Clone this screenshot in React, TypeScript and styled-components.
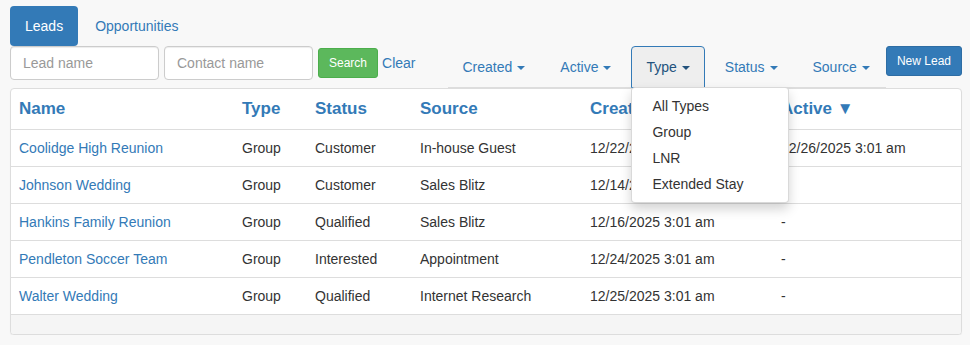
import styled, { createGlobalStyle, css } from "styled-components";

const GlobalStyle = createGlobalStyle`
  body {
    margin: 0;
    background-color: #f8f8f8;
    font-family: "Liberation Sans", Arial, Helvetica, sans-serif;
    font-size: 14px;
    color: #333;
  }
  * {
    box-sizing: border-box;
  }
`;

const blue = "#337ab7";

const Page = styled.div`
  padding: 6px 8px 0 10px;
`;

const Pills = styled.ul`
  display: flex;
  gap: 2px;
  margin: 0;
  padding: 0;
  list-style: none;
`;

const Pill = styled.li<{ $active?: boolean }>`
  padding: 10px 15px;
  line-height: 20px;
  border-radius: 4px;
  color: ${blue};
  cursor: pointer;
  ${(p) =>
    p.$active &&
    css`
      background-color: ${blue};
      color: #fff;
    `}
`;

const Toolbar = styled.div`
  display: flex;
  align-items: flex-start;
`;

const SearchForm = styled.form`
  display: flex;
  flex-shrink: 0;
  align-items: center;
  gap: 5px;
  height: 34px;
`;

const Input = styled.input`
  width: 149px;
  height: 34px;
  padding: 6px 12px;
  border: 1px solid #ccc;
  border-radius: 4px;
  font: inherit;
  color: #555;
  background: #fff;
  box-shadow: inset 0 1px 1px rgba(0, 0, 0, 0.075);
  outline: none;
  &::placeholder {
    color: #999;
  }
`;

const SmallButton = styled.button<{ $variant: "success" | "primary" }>`
  flex-shrink: 0;
  padding: 5px 10px;
  font-family: inherit;
  font-size: 12px;
  line-height: 18px;
  border-radius: 3px;
  border: 1px solid;
  color: #fff;
  white-space: nowrap;
  cursor: pointer;
  ${(p) =>
    p.$variant === "success"
      ? css`
          background-color: #5cb85c;
          border-color: #4cae4c;
        `
      : css`
          background-color: ${blue};
          border-color: #2e6da4;
        `}
`;

const ClearLink = styled.a`
  color: ${blue};
  text-decoration: none;
  margin-left: -1px;
  cursor: pointer;
`;

const FilterTabs = styled.ul`
  flex: 1 1 auto;
  display: flex;
  align-items: flex-start;
  gap: 5px;
  margin: 0 0 0 32px;
  padding: 0;
  list-style: none;
  border-bottom: 1px solid #ddd;
`;

const FilterTab = styled.li`
  position: relative;
  flex-shrink: 0;
  margin-bottom: -1px;
`;

const TabLink = styled.a<{ $open?: boolean }>`
  display: block;
  padding: 10px 14px;
  line-height: 20px;
  border: 1px solid transparent;
  border-radius: 4px 4px 0 0;
  color: ${blue};
  white-space: nowrap;
  cursor: pointer;
  ${(p) =>
    p.$open &&
    css`
      background-color: #eee;
      border-color: ${blue};
      color: #23527c;
    `}
`;

const Caret = styled.span`
  display: inline-block;
  width: 0;
  height: 0;
  margin-left: 5px;
  vertical-align: middle;
  border-top: 4px solid;
  border-left: 4px solid transparent;
  border-right: 4px solid transparent;
`;

const Menu = styled.ul`
  position: absolute;
  top: calc(100% - 1px);
  left: 0;
  z-index: 10;
  min-width: 158px;
  margin: 0;
  padding: 5px 0;
  list-style: none;
  background: #fff;
  border: 1px solid rgba(0, 0, 0, 0.15);
  border-radius: 4px;
  box-shadow: 0 6px 12px rgba(0, 0, 0, 0.175);
`;

const MenuItem = styled.li`
  padding: 3px 20px;
  line-height: 20px;
  color: #333;
  white-space: nowrap;
`;

const Panel = styled.div`
  background: #fff;
  border: 1px solid #ddd;
  border-radius: 4px;
  overflow: hidden;
  box-shadow: 0 1px 1px rgba(0, 0, 0, 0.05);
`;

const Table = styled.table`
  width: 100%;
  border-collapse: collapse;
  table-layout: fixed;
`;

const Col = styled.col<{ $w: number }>`
  width: ${(p) => p.$w}px;
`;

const Th = styled.th`
  text-align: left;
  padding: 8px;
  font-size: 17px;
  font-weight: bold;
  line-height: 24px;
  color: ${blue};
  border-bottom: 1px solid #ddd;
  white-space: nowrap;
`;

const Td = styled.td`
  padding: 8px;
  line-height: 20px;
  border-top: 1px solid #ddd;
  white-space: nowrap;
`;

const NameLink = styled.a`
  color: ${blue};
  text-decoration: none;
`;

const PanelFooter = styled.div`
  height: 20px;
  background: #f5f5f5;
  border-top: 1px solid #ddd;
`;

const columns = [
  { label: "Name", w: 223 },
  { label: "Type", w: 73 },
  { label: "Status", w: 105 },
  { label: "Source", w: 170 },
  { label: "Created", w: 191 },
  { label: "Active ▼", w: 188 },
];

const leads = [
  ["Coolidge High Reunion", "Group", "Customer", "In-house Guest", "12/22/2025 3:01 am", "12/26/2025 3:01 am"],
  ["Johnson Wedding", "Group", "Customer", "Sales Blitz", "12/14/2025 3:01 am", "-"],
  ["Hankins Family Reunion", "Group", "Qualified", "Sales Blitz", "12/16/2025 3:01 am", "-"],
  ["Pendleton Soccer Team", "Group", "Interested", "Appointment", "12/24/2025 3:01 am", "-"],
  ["Walter Wedding", "Group", "Qualified", "Internet Research", "12/25/2025 3:01 am", "-"],
];

const filters = ["Created", "Active", "Type", "Status", "Source"];
const typeOptions = ["All Types", "Group", "LNR", "Extended Stay"];

export default function App() {
  return (
    <Page>
      <GlobalStyle />
      <Pills>
        <Pill $active>Leads</Pill>
        <Pill>Opportunities</Pill>
      </Pills>
      <Toolbar>
        <SearchForm onSubmit={(e) => e.preventDefault()}>
          <Input placeholder="Lead name" />
          <Input placeholder="Contact name" />
          <SmallButton $variant="success" type="submit">
            Search
          </SmallButton>
          <ClearLink>Clear</ClearLink>
        </SearchForm>
        <FilterTabs>
          {filters.map((f) => (
            <FilterTab key={f}>
              <TabLink $open={f === "Type"}>
                {f}
                <Caret />
              </TabLink>
              {f === "Type" && (
                <Menu>
                  {typeOptions.map((o) => (
                    <MenuItem key={o}>{o}</MenuItem>
                  ))}
                </Menu>
              )}
            </FilterTab>
          ))}
        </FilterTabs>
        <SmallButton $variant="primary">New Lead</SmallButton>
      </Toolbar>
      <Panel>
        <Table>
          <colgroup>
            {columns.map((c) => (
              <Col key={c.label} $w={c.w} />
            ))}
          </colgroup>
          <thead>
            <tr>
              {columns.map((c) => (
                <Th key={c.label}>{c.label}</Th>
              ))}
            </tr>
          </thead>
          <tbody>
            {leads.map((row) => (
              <tr key={row[0]}>
                <Td>
                  <NameLink>{row[0]}</NameLink>
                </Td>
                {row.slice(1).map((cell, i) => (
                  <Td key={i}>{cell}</Td>
                ))}
              </tr>
            ))}
          </tbody>
        </Table>
        <PanelFooter />
      </Panel>
    </Page>
  );
}
